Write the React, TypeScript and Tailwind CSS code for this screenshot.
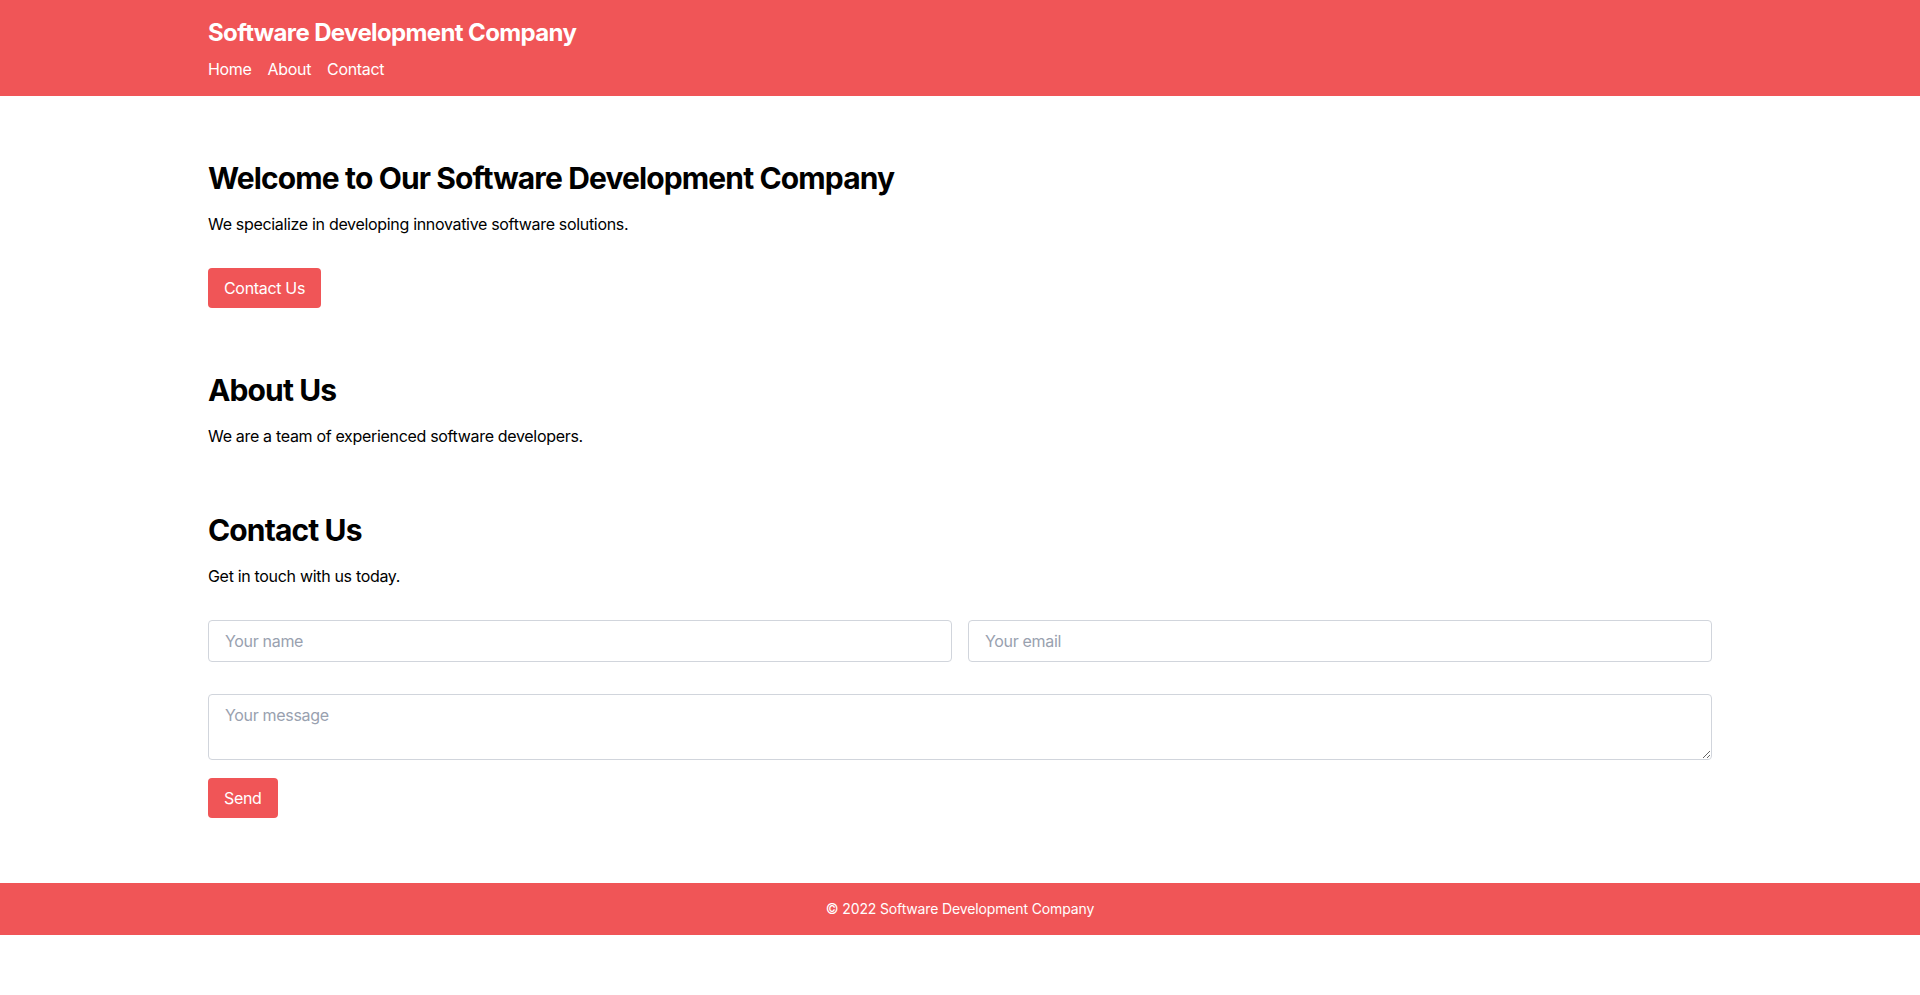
import React from "react";

export default function App() {
  return (
    <div className="min-h-screen bg-white text-black tracking-[-0.02em]" style={{ fontFamily: "Inter, 'Noto Sans', sans-serif" }}>
      <header className="bg-[#f05557] text-white">
        <div className="container mx-auto px-4 pt-[17px] pb-[15px]">
          <h1 className="text-2xl font-bold tracking-[-0.026em]">Software Development Company</h1>
          <nav className="mt-2 flex gap-4">
            <a href="#" className="text-base">Home</a>
            <a href="#" className="text-base">About</a>
            <a href="#" className="text-base">Contact</a>
          </nav>
        </div>
      </header>
      <main className="container mx-auto px-4 pt-8 pb-[33px]">
        <section className="py-8">
          <h2 className="mb-4 text-3xl font-bold tracking-[-0.029em]">Welcome to Our Software Development Company</h2>
          <p className="mb-8">We specialize in developing innovative software solutions.</p>
          <button className="rounded bg-[#f05557] px-4 py-2 text-white">Contact Us</button>
        </section>
        <section className="py-8">
          <h2 className="mb-4 text-3xl font-bold tracking-[-0.029em]">About Us</h2>
          <p>We are a team of experienced software developers.</p>
        </section>
        <section className="py-8">
          <h2 className="mb-4 text-3xl font-bold tracking-[-0.029em]">Contact Us</h2>
          <p className="mb-8">Get in touch with us today.</p>
          <form onSubmit={(e) => e.preventDefault()}>
            <div className="mb-8 grid grid-cols-2 gap-4">
              <input
                type="text"
                placeholder="Your name"
                className="w-full rounded border border-gray-300 px-4 py-2 placeholder-gray-400 outline-none"
              />
              <input
                type="email"
                placeholder="Your email"
                className="w-full rounded border border-gray-300 px-4 py-2 placeholder-gray-400 outline-none"
              />
            </div>
            <textarea
              rows={2}
              placeholder="Your message"
              className="mb-[18px] block w-full rounded border border-gray-300 px-4 py-2 placeholder-gray-400 outline-none"
            />
            <button className="rounded bg-[#f05557] px-4 py-2 text-white">Send</button>
          </form>
        </section>
      </main>
      <footer className="bg-[#f05557] py-4 text-center text-sm tracking-[-0.01em] text-white">
        © 2022 Software Development Company
      </footer>
    </div>
  );
}
